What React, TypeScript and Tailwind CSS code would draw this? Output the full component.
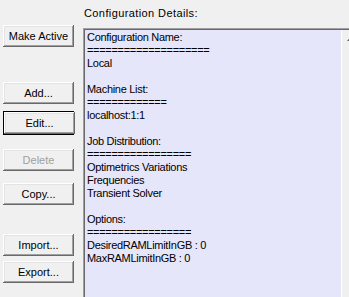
// Cluster configuration panel (classic Windows dialog look)
const buttonFace =
  "flex h-[22px] w-[71px] items-center justify-center bg-[#f0f0f0] text-[11px] leading-none shadow-[inset_-1px_-1px_#696969,inset_1px_1px_#ffffff,inset_-2px_-2px_#a0a0a0,inset_2px_2px_#e3e3e3]";

function WinButton({ label, disabled = false, isDefault = false, className = "" }: { label: string; disabled?: boolean; isDefault?: boolean; className?: string }) {
  if (isDefault) {
    return (
      <div className={`w-[71px] border border-black ${className}`}>
        <button className={`${buttonFace} h-[21px] w-[69px] text-black`}>{label}</button>
      </div>
    );
  }
  return (
    <button className={`${buttonFace} ${disabled ? "text-[#a0a0a0]" : "text-black"} ${className}`} disabled={disabled}>
      {label}
    </button>
  );
}

const lines = [
  "Configuration Name:",
  "====================",
  "Local",
  "",
  "Machine List:",
  "=============",
  "localhost:1:1",
  "",
  "Job Distribution:",
  "=================",
  "Optimetrics Variations",
  "Frequencies",
  "Transient Solver",
  "",
  "Options:",
  "=================",
  "DesiredRAMLimitInGB : 0",
  "MaxRAMLimitInGB : 0",
];

export default function App() {
  return (
    <div
      className="flex h-[297px] w-[349px] overflow-hidden bg-[#f0f0f0] text-black"
      style={{ fontFamily: "'Liberation Sans', Arial, sans-serif" }}
    >
      {/* 左侧按钮列 */}
      <div className="flex w-[83px] shrink-0 flex-col pl-[3px] pt-[25px]">
        <WinButton label="Make Active" />
        <WinButton label="Add..." className="mt-[35px]" />
        <WinButton label="Edit..." isDefault className="mt-[7px]" />
        <WinButton label="Delete" disabled className="mt-[14px]" />
        <WinButton label="Copy..." className="mt-[12px]" />
        <WinButton label="Import..." className="mt-[29px]" />
        <WinButton label="Export..." className="mt-[5px]" />
      </div>

      {/* 右侧详情 */}
      <div className="flex w-[275px] shrink-0 flex-col">
        <div className="mt-[7px] h-[21px] pl-[1px] text-[11px] leading-[13px] tracking-[0.4px]">Configuration Details:</div>
        <div className="flex flex-1 bg-[#e6e6fa] pl-[2px] pt-[2px] shadow-[inset_1px_1px_#a0a0a0,inset_2px_2px_#696969]">
          <div className="flex-1 pl-[2px] pt-[1px] text-[11px] leading-[13px] tracking-[-0.3px]">
            {lines.map((l, i) => (
              <div key={i} className="h-[13px] whitespace-pre">
                {l}
              </div>
            ))}
          </div>
          {/* 滚动条 */}
          <div className="w-[17px] shrink-0 border-l border-white bg-[#f0f0f0]">
            <div className="flex h-[17px] items-center justify-center">
              <svg width="7" height="4" viewBox="0 0 7 4">
                <path d="M3.5 0 L7 4 L0 4 Z" fill="#606060" />
              </svg>
            </div>
          </div>
        </div>
      </div>
    </div>
  );
}
